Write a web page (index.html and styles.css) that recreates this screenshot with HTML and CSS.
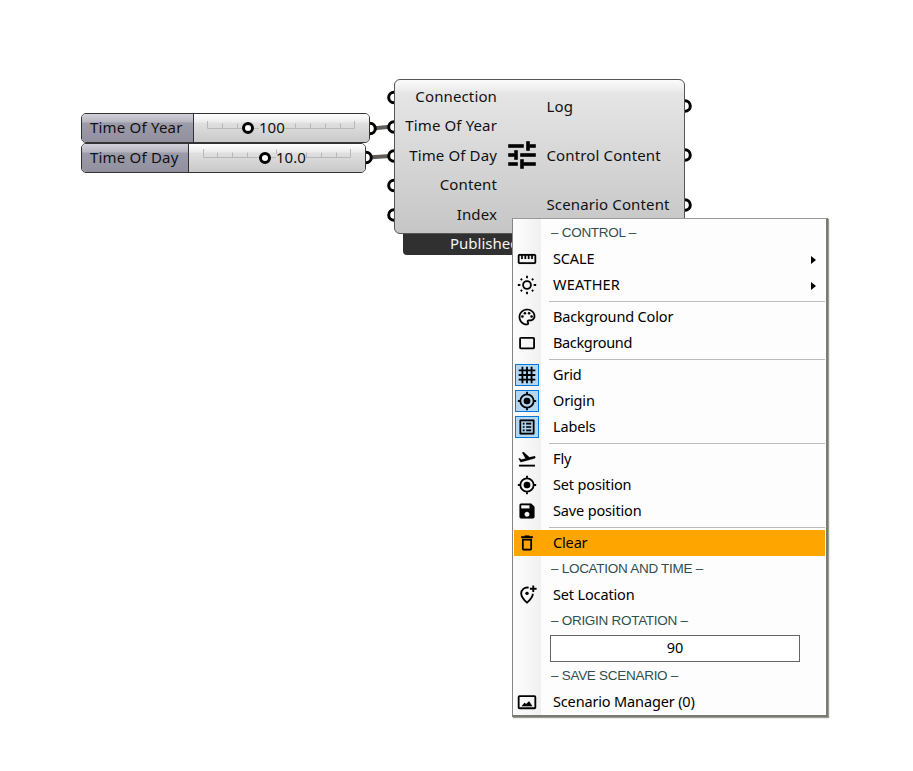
FILE: index.html
```html
<!DOCTYPE html>
<html lang="en">
<head>
<meta charset="utf-8">
<title>Scenario canvas</title>
<link rel="stylesheet" href="styles.css">
</head>
<body>
<main class="canvas">
  <svg class="wires" width="913" height="771">
    <path class="wire" d="M372 128.5L390 126.8M368 157.5L390 156"/>
    <g class="ports">
      <circle cx="370" cy="128.5" r="5.3"/><circle cx="366" cy="157.5" r="5.3"/>
      <circle cx="394" cy="97.5" r="5.3"/><circle cx="394" cy="127" r="5.3"/><circle cx="394" cy="156" r="5.3"/><circle cx="394" cy="185.5" r="5.3"/><circle cx="394" cy="215" r="5.3"/>
      <circle cx="685" cy="106" r="5.3"/><circle cx="685" cy="155" r="5.3"/><circle cx="685" cy="205" r="5.3"/>
    </g>
  </svg>

  <section class="slider slider-year">
    <div class="slider-name"><span>Time Of Year</span></div>
    <div class="slider-track">
      <svg class="ticks" width="150" height="12"><path d="M.5 1v7.500H147.500V1M15.500 3.500v5M30.500 3.500v5M88.500 3.500v5M103.500 3.500v5M118.500 3.500v5M133.500 3.500v5"/></svg>
      <div class="grip grip-year"><i class="knob"></i><span>100</span></div>
    </div>
  </section>
  <section class="slider slider-day">
    <div class="slider-name"><span>Time Of Day</span></div>
    <div class="slider-track">
      <svg class="ticks" width="150" height="12"><path d="M.5 1v8.500H147.500V1M14.500 4.500v5M29.500 4.500v5M44.500 4.500v5M73.500 1.500v5M88.500 4.500v5M103.500 4.500v5M118.500 4.500v5M133.500 4.500v5"/></svg>
      <div class="grip grip-day"><i class="knob"></i><span>10.0</span></div>
    </div>
  </section>

  <div class="banner"><span>Published</span></div>
  <section class="component">
    <div class="inputs">
      <span>Connection</span><span>Time Of Year</span><span>Time Of Day</span><span>Content</span><span>Index</span>
    </div>
    <svg class="tune" viewBox="0 0 24 24"><path d="M3 17v2h6v-2H3zM3 5v2h10V5H3zm10 16v-2h8v-2h-8v-2h-2v6h2zM7 9v2H3v2h4v2h2V9H7zm14 4v-2H11v2h10zm-6-4h2V7h4V5h-4V3h-2v6z"/></svg>
    <div class="outputs">
      <span>Log</span><span>Control Content</span><span>Scenario Content</span>
    </div>
  </section>

  <nav class="menu">
    <div class="heading"><span>– CONTROL –</span></div>
    <div class="item"><span class="icon"><svg viewBox="0 0 24 24"><path d="M21 6H3c-1.100 0-2 .9-2 2v8c0 1.100.9 2 2 2h18c1.100 0 2-.9 2-2V8c0-1.100-.9-2-2-2zm0 10H3V8h2v4h2V8h2v4h2V8h2v4h2V8h2v4h2V8h2v8z"/></svg></span><span class="label">SCALE</span><i class="arrow"></i></div>
    <div class="item"><span class="icon"><svg viewBox="0 0 24 24"><g class="line"><circle cx="12" cy="12" r="4.700"/><path d="M12 1v3M12 20v3M1 12h3M20 12h3M4.500 4.500l1.600 1.600M17.900 17.900l1.600 1.600M4.500 19.500l1.600-1.600M17.900 6.100l1.600-1.600"/></g></svg></span><span class="label wide">WEATHER</span><i class="arrow"></i></div>
    <hr>
    <div class="item"><span class="icon"><svg viewBox="0 0 24 24"><path d="M12 22C6.490 22 2 17.510 2 12S6.490 2 12 2s10 4.040 10 9c0 3.310-2.690 6-6 6h-1.770c-.28 0-.5.22-.5.5 0 .12.05.23.13.33.41.47.64 1.060.64 1.670A2.500 2.500 0 0 1 12 22zm0-18c-4.410 0-8 3.590-8 8s3.590 8 8 8c.28 0 .5-.22.5-.5a.54.54 0 0 0-.14-.35c-.41-.46-.63-1.050-.63-1.650a2.500 2.500 0 0 1 2.500-2.500H16c2.210 0 4-1.790 4-4 0-3.860-3.590-7-8-7z"/><circle cx="6.500" cy="11.500" r="1.500"/><circle cx="9.500" cy="7.500" r="1.500"/><circle cx="14.500" cy="7.500" r="1.500"/><circle cx="17.500" cy="11.500" r="1.500"/></svg></span><span class="label">Background Color</span></div>
    <div class="item"><span class="icon"><svg viewBox="0 0 24 24"><rect class="line" x="3.700" y="5.800" width="16.800" height="12.600" rx="1"/></svg></span><span class="label tight">Background</span></div>
    <hr>
    <div class="item"><span class="icon checked"><svg viewBox="0 0 24 24"><path class="line" d="M6.500 2v20M12 2v20M17.500 2v20M2 6.500h20M2 12h20M2 17.500h20"/></svg></span><span class="label">Grid</span></div>
    <div class="item"><span class="icon checked"><svg viewBox="0 0 24 24"><circle cx="12" cy="12" r="4"/><path class="line" d="M20 12A8 8 0 1 1 4 12A8 8 0 1 1 20 12M12 1v3M12 20v3M1 12h3M20 12h3"/></svg></span><span class="label">Origin</span></div>
    <div class="item"><span class="icon checked"><svg viewBox="0 0 24 24"><path d="M11 7h6v2h-6zM11 11h6v2h-6zM11 15h6v2h-6zM7 7h2v2H7zM7 11h2v2H7zM7 15h2v2H7zM20.100 3H3.900c-.5 0-.9.4-.9.9v16.200c0 .4.4.9.9.9h16.200c.4 0 .9-.5.9-.9V3.900c0-.5-.5-.9-.9-.9zM19 19H5V5h14v14z"/></svg></span><span class="label">Labels</span></div>
    <hr>
    <div class="item"><span class="icon"><svg viewBox="0 0 24 24"><path d="M2.500 19h19v2h-19v-2zm19.570-9.360c-.21-.8-1.040-1.280-1.840-1.060L14.920 10l-6.900-6.430-1.930.51 4.140 7.170-4.970 1.330-1.970-1.540-1.450.39 2.590 4.490L21 11.490c.81-.23 1.280-1.050 1.070-1.850z"/></svg></span><span class="label">Fly</span></div>
    <div class="item"><span class="icon"><svg viewBox="0 0 24 24"><circle cx="12" cy="12" r="4"/><path class="line" d="M20 12A8 8 0 1 1 4 12A8 8 0 1 1 20 12M12 1v3M12 20v3M1 12h3M20 12h3"/></svg></span><span class="label">Set position</span></div>
    <div class="item"><span class="icon"><svg viewBox="0 0 24 24"><path d="M17 3H5c-1.110 0-2 .9-2 2v14c0 1.100.89 2 2 2h14c1.100 0 2-.9 2-2V7l-4-4zm-5 16c-1.660 0-3-1.340-3-3s1.340-3 3-3 3 1.340 3 3-1.340 3-3 3zm3-10H5V5h10v4z"/></svg></span><span class="label">Save position</span></div>
    <hr>
    <div class="item active"><span class="icon"><svg viewBox="0 0 24 24"><path d="M6 19c0 1.100.9 2 2 2h8c1.100 0 2-.9 2-2V7H6v12zM8 9h8v10H8V9zm7.500-5l-1-1h-5l-1 1H5v2h14V4h-3.500z"/></svg></span><span class="label">Clear</span></div>
    <div class="heading"><span>– LOCATION AND TIME –</span></div>
    <div class="item"><span class="icon"><svg viewBox="0 0 24 24"><path class="line" d="M14 3.200C9 2.200 5 5.800 5 10.200C5 13.500 7.300 17 12 21.200C16.700 17 19 13.500 19 10.500M19.500 .5v8M15.500 4.500h8"/><circle cx="12" cy="10" r="2"/></svg></span><span class="label">Set Location</span></div>
    <div class="heading"><span>– ORIGIN ROTATION –</span></div>
    <div class="field"><span>90</span></div>
    <div class="heading"><span>– SAVE SCENARIO –</span></div>
    <div class="item"><span class="icon"><svg viewBox="0 0 24 24"><rect class="line" x="2" y="5" width="20" height="14.500" rx="1"/><path d="M5.500 17l3.500-4 2 1.500 3.500-3.500L18.500 17z"/></svg></span><span class="label">Scenario Manager (0)</span></div>
  </nav>
</main>
</body>
</html>
```

FILE: styles.css
```css
* { box-sizing: border-box; }
body { margin: 0; background: #fff; color: #111; font-family: "Noto Sans", "Open Sans", sans-serif; }
.canvas { position: relative; width: 913px; height: 771px; overflow: hidden; }
.canvas span { white-space: nowrap; }

.wires { position: absolute; left: 0; top: 0; }
.wire { stroke: #605d59; stroke-width: 4; fill: none; }
.ports circle { fill: #fff; stroke: #000; stroke-width: 3; }

/* slider nodes */
.slider { position: absolute; left: 81px; height: 30px; display: flex; border: 1px solid #333; border-radius: 5px; overflow: hidden; font-size: 15px; line-height: 26px; letter-spacing: .2px; }
.slider-year { top: 113px; width: 289px; }
.slider-day { top: 143px; width: 285px; }
.slider-name { width: 112px; padding-left: 8px; border-right: 1px solid #333; background: linear-gradient(#d2d1da 0, #b5b4c0 8px, #9c9ba9 9px, #92909f 100%); }
.slider-day .slider-name { width: 107px; }
.slider-track { position: relative; flex: 1; background: linear-gradient(#fff 0, #ececec 8px, #e0e0e0 9px, #c9c9c9 100%); }
.ticks { position: absolute; left: 13px; top: 6px; }
.slider-day .ticks { left: 14px; top: 4px; }
.ticks path { fill: none; stroke: #b8b8b8; }
.grip { position: absolute; top: 0; height: 28px; display: flex; align-items: center; gap: 5px; }
.grip-year { left: 48px; }
.grip-day { left: 70px; }
.grip span { margin-top: -2px; letter-spacing: 0; background: linear-gradient(transparent 10px, #dcdcdc 10px, #d6d6d6 19px, transparent 19px); }
.knob { width: 12px; height: 12px; border: 3px solid #000; border-radius: 50%; background: #fff; }

/* component node */
.banner { position: absolute; left: 403px; top: 228px; width: 273px; height: 27px; padding: 5px 0 0 47px; background: #303030; border-radius: 4px; color: #f5f5f5; font-size: 15px; line-height: 20px; }
.component { position: absolute; left: 394px; top: 79px; width: 291px; height: 155px; display: flex; border: 1px solid #555; border-radius: 6px; background: linear-gradient(#fbfbfb 0, #ebebeb 11px, #e5e5e5 13px, #c6c6c6 100%); font-size: 15px; letter-spacing: .13px; }
.inputs { width: 102px; padding-top: 2px; display: flex; flex-direction: column; align-items: flex-end; }
.inputs span { line-height: 29.400px; height: 29.400px; }
.tune { width: 36px; height: 36px; margin: 57px 0 0 7px; stroke: #000; stroke-width: .4; }
.outputs { margin-left: 6.500px; padding-top: 1.500px; display: flex; flex-direction: column; }
.outputs span { line-height: 49px; height: 49px; }

/* context menu */
.menu { position: absolute; left: 512px; top: 218px; width: 316px; height: 499px; padding: 1px 1px 0; border: 1px solid #858585; border-top-color: #999; border-right: 2px solid #777b72; border-bottom: 2px solid #777b72; box-shadow: 1px 1px 1px #9a9d94; background: linear-gradient(90deg, #fcfcfc 1px, #f9f9f9 10px, #f0f0f0 28px, #fdfdfd 28px); color: #000; font-size: 14.500px; }
.item { height: 26px; display: flex; align-items: center; }
.label { height: 26px; line-height: 24px; letter-spacing: -.15px; }
.wide { letter-spacing: .2px; }
.tight { letter-spacing: -.35px; }
.icon { width: 24px; height: 22px; margin: 0 14px 0 1px; display: flex; align-items: center; justify-content: center; flex: none; }
.icon svg { width: 20px; height: 20px; fill: #000; stroke: #000; stroke-width: .15; flex: none; }
.icon .line { fill: none; stroke: #000; stroke-width: 2.200; }
.checked { background: #b3d7f3; border: 1px solid #0078d7; }
.active { background: #ffa500; }
.arrow { margin: 1px 9px 0 auto; border-left: 5px solid #000; border-top: 4.500px solid transparent; border-bottom: 4.500px solid transparent; }
.menu hr { height: 1px; margin: 3px 0 2px 35px; border: 0; background: #bdbdbd; }
.heading { height: 26px; padding-left: 37px; color: #2f4f4f; font: 13.500px/25px "Liberation Sans", Arial, sans-serif; letter-spacing: -.28px; }
.field { width: 250px; height: 27px; margin: 1px 0 1px 36px; border: 1px solid #646464; background: #fff; text-align: center; line-height: 23px; }
```
